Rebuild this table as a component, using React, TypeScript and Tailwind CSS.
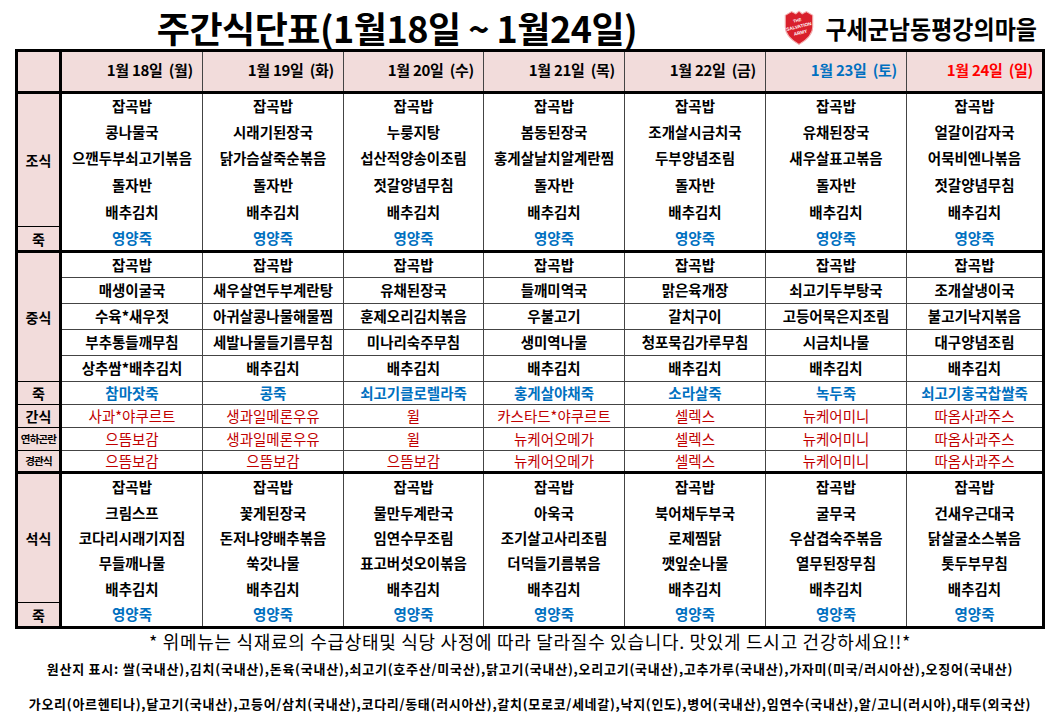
import { FC } from "react";

type Kind = "main" | "juk" | "snack";
type Row = { h: string; k: Kind; items: string[]; line?: boolean };
type Label = { t: string; h: string; small?: boolean };
type Section = { labels: Label[]; rows: Row[] };

const COLS = [
  "w-[140px]",
  "w-[141px] border-l",
  "w-[140px] border-l",
  "w-[141px] border-l",
  "w-[141px] border-l",
  "w-[141px] border-l",
  "flex-1 border-l",
];

const DAYS = [
  { t: "1월 18일  (월)", c: "text-black" },
  { t: "1월 19일  (화)", c: "text-black" },
  { t: "1월 20일  (수)", c: "text-black" },
  { t: "1월 21일  (목)", c: "text-black" },
  { t: "1월 22일  (금)", c: "text-black" },
  { t: "1월 23일  (토)", c: "text-[#0070c0]" },
  { t: "1월 24일  (일)", c: "text-[#ff0000]" },
];

const all = (s: string) => Array(7).fill(s) as string[];

const SECTIONS: Section[] = [
  {
    labels: [
      { t: "조식", h: "h-[132px]" },
      { t: "죽", h: "h-[24px]" },
    ],
    rows: [
      { h: "h-[25px]", k: "main", items: all("잡곡밥") },
      { h: "h-[26px]", k: "main", items: ["콩나물국", "시래기된장국", "누룽지탕", "봄동된장국", "조개살시금치국", "유채된장국", "얼갈이감자국"] },
      { h: "h-[27px]", k: "main", items: ["으깬두부쇠고기볶음", "닭가슴살죽순볶음", "섭산적양송이조림", "홍게살날치알계란찜", "두부양념조림", "새우살표고볶음", "어묵비엔나볶음"] },
      { h: "h-[27px]", k: "main", items: ["돌자반", "돌자반", "젓갈양념무침", "돌자반", "돌자반", "돌자반", "젓갈양념무침"] },
      { h: "h-[27px]", k: "main", items: all("배추김치") },
      { h: "h-[24px]", k: "juk", items: all("영양죽") },
    ],
  },
  {
    labels: [
      { t: "중식", h: "h-[128px]" },
      { t: "죽", h: "h-[23px]" },
      { t: "간식", h: "h-[23px]" },
      { t: "연하곤란", h: "h-[23px]", small: true },
      { t: "경관식", h: "h-[21px]", small: true },
    ],
    rows: [
      { h: "h-[24px]", k: "main", items: all("잡곡밥") },
      { h: "h-[26px]", k: "main", line: true, items: ["매생이굴국", "새우살연두부계란탕", "유채된장국", "들깨미역국", "맑은육개장", "쇠고기두부탕국", "조개살냉이국"] },
      { h: "h-[26px]", k: "main", line: true, items: ["수육*새우젓", "아귀살콩나물해물찜", "훈제오리김치볶음", "우불고기", "갈치구이", "고등어묵은지조림", "불고기낙지볶음"] },
      { h: "h-[26px]", k: "main", line: true, items: ["부추통들깨무침", "세발나물들기름무침", "미나리숙주무침", "생미역나물", "청포묵김가루무침", "시금치나물", "대구양념조림"] },
      { h: "h-[26px]", k: "main", line: true, items: ["상추쌈*배추김치", "배추김치", "배추김치", "배추김치", "배추김치", "배추김치", "배추김치"] },
      { h: "h-[23px]", k: "juk", line: true, items: ["참마잣죽", "콩죽", "쇠고기클로렐라죽", "홍게살야채죽", "소라살죽", "녹두죽", "쇠고기홍국찹쌀죽"] },
      { h: "h-[23px]", k: "snack", line: true, items: ["사과*야쿠르트", "생과일메론우유", "윌", "카스타드*야쿠르트", "셀렉스", "뉴케어미니", "따옴사과주스"] },
      { h: "h-[23px]", k: "snack", line: true, items: ["으뜸보감", "생과일메론우유", "윌", "뉴케어오메가", "셀렉스", "뉴케어미니", "따옴사과주스"] },
      { h: "h-[21px]", k: "snack", line: true, items: ["으뜸보감", "으뜸보감", "으뜸보감", "뉴케어오메가", "셀렉스", "뉴케어미니", "따옴사과주스"] },
    ],
  },
  {
    labels: [
      { t: "석식", h: "h-[128px]" },
      { t: "죽", h: "h-[24px]" },
    ],
    rows: [
      { h: "h-[26px]", k: "main", items: all("잡곡밥") },
      { h: "h-[26px]", k: "main", items: ["크림스프", "꽃게된장국", "물만두계란국", "아욱국", "북어채두부국", "굴무국", "건새우근대국"] },
      { h: "h-[25px]", k: "main", items: ["코다리시래기지짐", "돈저냐양배추볶음", "임연수무조림", "조기살고사리조림", "로제찜닭", "우삼겹숙주볶음", "닭살굴소스볶음"] },
      { h: "h-[25px]", k: "main", items: ["무들깨나물", "쑥갓나물", "표고버섯오이볶음", "더덕들기름볶음", "깻잎순나물", "열무된장무침", "톳두부무침"] },
      { h: "h-[26px]", k: "main", items: all("배추김치") },
      { h: "h-[24px]", k: "juk", items: all("영양죽") },
    ],
  },
];

const KIND: Record<Kind, string> = {
  main: "text-black font-bold",
  juk: "text-[#0070c0] font-bold",
  snack: "text-[#c00000] font-normal",
};

const Logo: FC = () => (
  <svg width="34" height="37" viewBox="0 0 32 35" className="shrink-0">
    <path
      d="M3 6 L9 2.5 L13 4.5 L16 2 L19 4.5 L23 2.5 L29 6 L29 17 C29 25 22 30 16 33.5 C10 30 3 25 3 17 Z"
      fill="#d9202c"
      stroke="#f3b2b2"
      strokeWidth="1"
    />
    <g fill="#fff" fontFamily="Liberation Sans, sans-serif" fontWeight="700" transform="rotate(-14 16 17)">
      <text x="16" y="12" fontSize="4" textAnchor="middle">THE</text>
      <text x="16" y="18" fontSize="4.4" textAnchor="middle">SALVATION</text>
      <text x="16" y="24" fontSize="4.4" textAnchor="middle">ARMY</text>
    </g>
  </svg>
);

const App: FC = () => {
  return (
    <div className="w-[1055px] h-[718px] bg-white overflow-hidden font-['Noto_Sans_CJK_KR',sans-serif] text-black">
      {/* title bar */}
      <div className="flex items-center h-[49px]">
        <div className="w-[770px] shrink-0 flex justify-center pl-[24px] pt-[4px]">
          <span className="inline-block text-[36px] font-bold leading-[42px] tracking-[-0.5px] whitespace-nowrap">
            주간식단표(1월18일 ~ 1월24일)
          </span>
        </div>
        <div className="ml-auto mr-[18px] flex items-center gap-[9px] pt-[6px] shrink-0">
          <Logo />
          <span className="inline-block text-[23px] font-bold leading-[30px] whitespace-nowrap scale-y-[1.08]">
            구세군남동평강의마을
          </span>
        </div>
      </div>

      {/* menu table */}
      <div className="ml-[15px] w-[1030px] border-[3px] border-black">
        <div className="flex h-[42px] border-b-[3px] border-black bg-[#f2dcdb]">
          <div className="w-[44px] border-r-[3px] border-black" />
          {DAYS.map((d, i) => (
            <div
              key={d.t}
              className={`${COLS[i]} border-[#444] flex items-center justify-end pr-[9px] pb-[3px]`}
            >
              <span className={`text-[15px] font-bold whitespace-pre tracking-[-0.3px] ${d.c}`}>{d.t}</span>
            </div>
          ))}
        </div>

        {SECTIONS.map((s, si) => (
          <div key={si} className={`flex ${si > 0 ? "border-t-[3px] border-black" : ""}`}>
            <div className="w-[44px] border-r-[3px] border-black bg-[#f2dcdb] flex flex-col">
              {s.labels.map((l, li) => (
                <div
                  key={li}
                  className={`${l.h} flex items-center justify-center font-bold leading-none ${
                    li > 0 ? "border-t border-black" : ""
                  } ${l.small ? "text-[10.5px] tracking-[-0.8px] whitespace-nowrap" : "text-[14px]"}`}
                >
                  {l.t}
                </div>
              ))}
            </div>
            {COLS.map((c, ci) => (
              <div key={ci} className={`${c} border-[#444] flex flex-col`}>
                {s.rows.map((r, ri) => (
                  <div
                    key={ri}
                    className={`${r.h} flex items-center justify-center text-[14.5px] leading-none whitespace-nowrap ${KIND[r.k]} ${
                      r.line ? "border-t border-[#444]" : ""
                    }`}
                  >
                    {r.items[ci]}
                  </div>
                ))}
              </div>
            ))}
          </div>
        ))}
      </div>

      {/* notes */}
      <div className="ml-[15px] w-[1030px] flex flex-col items-center">
        <p className="text-[18px] leading-[24px] font-normal tracking-[0.7px] whitespace-nowrap">
          * 위메뉴는 식재료의 수급상태및 식당 사정에 따라 달라질수 있습니다. 맛있게 드시고 건강하세요!!*
        </p>
        <p className="mt-[6px] text-[13px] leading-[20px] font-bold tracking-[0.75px] whitespace-nowrap">
          원산지 표시: 쌀(국내산),김치(국내산),돈육(국내산),쇠고기(호주산/미국산),닭고기(국내산),오리고기(국내산),고추가루(국내산),가자미(미국/러시아산),오징어(국내산)
        </p>
        <p className="mt-[15px] text-[13px] leading-[20px] font-bold tracking-[0.7px] whitespace-nowrap">
          가오리(아르헨티나),달고기(국내산),고등어/삼치(국내산),코다리/동태(러시아산),갈치(모로코/세네갈),낙지(인도),병어(국내산),임연수(국내산),알/고니(러시아),대두(외국산)
        </p>
      </div>
    </div>
  );
};

export default App;
